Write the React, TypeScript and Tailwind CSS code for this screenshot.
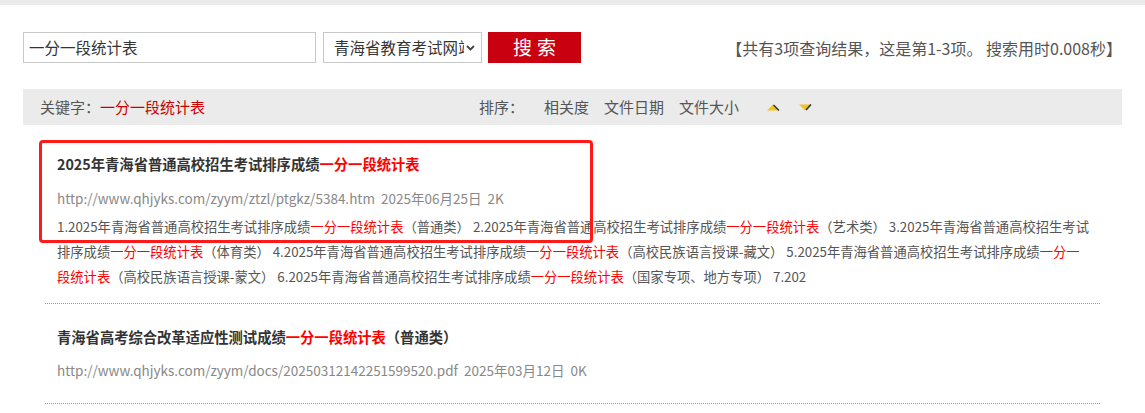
import React from 'react';

const KW = '一分一段统计表';

function Red({ children }: { children: React.ReactNode }) {
  return <span className="text-[#f00]">{children}</span>;
}

function SortArrow({ down }: { down?: boolean }) {
  return (
    <svg width="13" height="7" viewBox="0 0 13 7">
      {down ? (
        <>
          <polygon points="0,0.5 12,0.5 6,6.5" fill="#f7c21a" />
          <line x1="12" y1="0.5" x2="7" y2="6" stroke="#333" strokeWidth="1.6" />
        </>
      ) : (
        <>
          <polygon points="0,6.5 12,6.5 6,0.5" fill="#f7c21a" />
          <line x1="6.5" y1="1" x2="12" y2="6.5" stroke="#333" strokeWidth="1.4" />
        </>
      )}
    </svg>
  );
}

export default function App() {
  return (
    <div
      className="w-[1145px] h-[413px] overflow-hidden bg-white text-[#333] text-[14px]"
      style={{ fontFamily: '"Microsoft YaHei", "Noto Sans CJK SC", sans-serif' }}
    >
      {/* top strip */}
      <div className="h-[5px] bg-[#ebebeb]" />

      <div className="relative mx-[23px] w-[1099px] pt-[27px]">
        {/* search row */}
        <div className="flex items-center h-[31px]">
          <div className="w-[293px] h-[31px] border border-[#c8c8c8] flex items-center pl-[5px] text-[15.5px] text-[#333]">
            {KW}
          </div>
          <div className="ml-[7px] w-[159px] h-[31px] border border-[#c8c8c8] flex items-center pl-[10px] pr-[6px] text-[15.5px] text-[#333]">
            <span className="flex-1 overflow-hidden whitespace-nowrap">青海省教育考试网站</span>
            <svg width="9" height="6" viewBox="0 0 9 6" className="ml-[2px]">
              <path d="M1 1 L4.5 4.5 L8 1" stroke="#444" strokeWidth="1.8" fill="none" />
            </svg>
          </div>
          <button className="ml-[6px] w-[93px] h-[31px] bg-[#c90010] text-white text-[19px] tracking-[5px] pl-[5px] flex items-center justify-center">
            搜索
          </button>
          <div className="ml-auto mr-0 text-[16px] text-[#555] whitespace-nowrap">
            【共有3项查询结果，这是第1-3项。 搜索用时0.008秒】
          </div>
        </div>

        {/* sort bar */}
        <div className="mt-[26px] h-[36px] bg-[#ebebeb] flex items-center text-[15px] text-[#555]">
          <div className="pl-[17px] w-[456px]">
            关键字：<span className="text-[#c00]">{KW}</span>
          </div>
          <span>排序：</span>
          <span className="ml-[20px]">相关度</span>
          <span className="ml-[15px]">文件日期</span>
          <span className="ml-[15px]">文件大小</span>
          <span className="ml-[28px] flex items-center gap-[19px]">
            <SortArrow />
            <SortArrow down />
          </span>
        </div>

        {/* results */}
        <div className="mx-[22px] mt-[4px]">
          <div className="px-[12px] pt-[23px] pb-[14px] border-b border-dotted border-[#999]">
            <div className="h-[24px] leading-[24px] text-[14.3px] font-bold text-[#333]">
              2025年青海省普通高校招生考试排序成绩<Red>{KW}</Red>
            </div>
            <div className="mt-[10px] h-[24px] leading-[24px] text-[13.5px] text-[#888]">
              http://www.qhjyks.com/zyym/ztzl/ptgkz/5384.htm&nbsp; 2025年06月25日&nbsp; 2K
            </div>
            <div className="mt-[4px] leading-[25px] text-[13.3px] text-[#555]">
              <div className="whitespace-nowrap">
                1.2025年青海省普通高校招生考试排序成绩<Red>{KW}</Red>（普通类） 2.2025年青海省普通高校招生考试排序成绩<Red>{KW}</Red>（艺术类） 3.2025年青海省普通高校招生考试
              </div>
              <div className="whitespace-nowrap">
                排序成绩<Red>{KW}</Red>（体育类） 4.2025年青海省普通高校招生考试排序成绩<Red>{KW}</Red>（高校民族语言授课-藏文） 5.2025年青海省普通高校招生考试排序成绩<Red>一分一</Red>
              </div>
              <div className="whitespace-nowrap">
                <Red>段统计表</Red>（高校民族语言授课-蒙文） 6.2025年青海省普通高校招生考试排序成绩<Red>{KW}</Red>（国家专项、地方专项） 7.202
              </div>
            </div>
          </div>

          <div className="px-[12px] pt-[21px] pb-[21px] border-b border-dotted border-[#999]">
            <div className="h-[24px] leading-[24px] text-[14.3px] font-bold text-[#333]">
              青海省高考综合改革适应性测试成绩<Red>{KW}</Red>（普通类）
            </div>
            <div className="mt-[9px] h-[24px] leading-[24px] text-[13.5px] text-[#888]">
              http://www.qhjyks.com/zyym/docs/20250312142251599520.pdf&nbsp; 2025年03月12日&nbsp; 0K
            </div>
          </div>
        </div>

        {/* annotation box */}
        <div className="absolute left-[16px] top-[135px] w-[554px] h-[103px] border-[3px] border-[#ff1a1a] rounded-[4px] pointer-events-none" />
      </div>
    </div>
  );
}
